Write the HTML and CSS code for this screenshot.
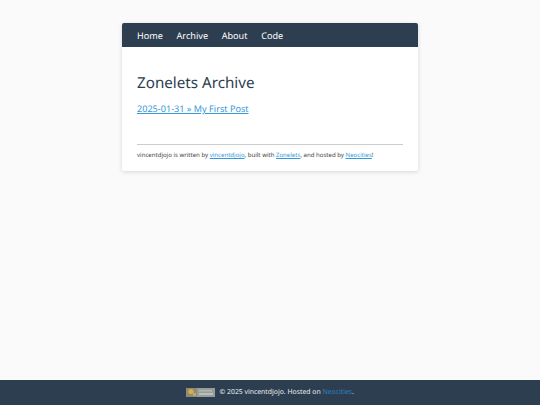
FILE: index.html
```html
<!DOCTYPE html>
<html lang="en">
<head>
    <meta charset="UTF-8">
    <meta name="viewport" content="width=device-width, initial-scale=1.0">
    <title>Zonelets Archive</title>
    <link rel="stylesheet" href="styles.css">
</head>
<body>
    <main class="page">
        <div class="container">
            <nav class="nav">
                <a href="#">Home</a>
                <a href="#">Archive</a>
                <a href="#">About</a>
                <a href="#">Code</a>
            </nav>
            <div class="content">
                <h1>Zonelets Archive</h1>
                <ul class="posts">
                    <li><a href="#">2025-01-31 » My First Post</a></li>
                </ul>
                <div class="credits">
                    vincentdjojo is written by <a href="#">vincentdjojo</a>, built with <a href="#">Zonelets</a>, and hosted by <a href="#">Neocities</a>!
                </div>
            </div>
        </div>
    </main>
    <footer class="footer">
        <svg class="badge" viewBox="0 0 29 9" width="29" height="9" aria-hidden="true">
            <rect width="29" height="9" fill="#9a9c9a"/>
            <rect width="11" height="9" fill="#8f8a70"/>
            <circle cx="5" cy="3.5" r="2.6" fill="#d8ad4c"/>
            <rect x="7" y="5" width="3" height="3" fill="#b9a878"/>
            <rect x="13" y="2" width="13" height="1.5" fill="#b4b6b4"/>
            <rect x="13" y="5" width="14" height="2" fill="#bcbebc"/>
        </svg>
        <span>© 2025 vincentdjojo. Hosted on <a href="#">Neocities</a>.</span>
    </footer>
</body>
</html>
```

FILE: styles.css
```css
body {
    font-family: "Noto Sans", sans-serif;
    text-rendering: geometricPrecision;
    background-color: #fafafa;
    color: #2c3e50;
    margin: 0;
    min-height: 100vh;
    display: flex;
    flex-direction: column;
}

.page {
    flex: 1;
    padding-top: 23px;
}

.container {
    width: 296px;
    margin: 0 auto;
    background: white;
    border-radius: 2px;
    box-shadow: 0 1px 4px rgba(0, 0, 0, 0.15);
}

.nav {
    display: flex;
    gap: 13.7px;
    height: 24px;
    align-items: center;
    padding: 0 15px;
    background-color: #2c3e50;
    border-radius: 2px 2px 0 0;
}

.nav a {
    color: #fff;
    font-size: 9.1px;
    text-decoration: none;
}

.content {
    padding: 25px 15px 0;
}

h1 {
    font-size: 15.2px;
    font-weight: 400;
    line-height: 22px;
    margin: 0 0 8px;
}

.posts {
    list-style: none;
    margin: 0;
    padding: 0;
}

.posts li {
    font-size: 9.1px;
    line-height: 14px;
}

a {
    color: #3498db;
}

.credits {
    margin-top: 28px;
    padding: 5px 0 11px;
    border-top: 1px solid #ccc;
    font-size: 6.07px;
    line-height: 10px;
    color: #444;
}

.footer {
    height: 25px;
    background-color: #2c3e50;
    color: #ecf0f1;
    font-size: 6.85px;
    display: flex;
    justify-content: center;
    align-items: center;
    gap: 4.5px;
}

.footer a {
    color: #2f80c0;
    text-decoration: none;
}
```
